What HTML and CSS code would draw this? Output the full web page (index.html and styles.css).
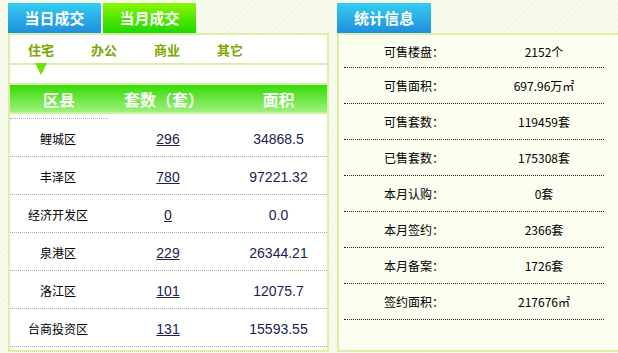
FILE: index.html
```html
<!DOCTYPE html>
<html lang="zh-CN">
<head>
    <meta charset="UTF-8">
    <title>成交统计</title>
    <link rel="stylesheet" href="styles.css">
</head>
<body>
    <div class="page">
        <div class="panel deal">
            <div class="tabs">
                <a href="#" class="tab blue">当日成交</a>
                <a href="#" class="tab green">当月成交</a>
            </div>
            <div class="box">
                <div class="subnav">
                    <a href="#">住宅</a>
                    <a href="#">办公</a>
                    <a href="#">商业</a>
                    <a href="#">其它</a>
                </div>
                <div class="pointer"><span class="arrow"></span></div>
                <div class="thead">
                    <span>区县</span>
                    <span>套数（套）</span>
                    <span>面积</span>
                </div>
                <div class="tbody">
                    <div class="cut"></div>
                    <div class="row"><span class="name">鲤城区</span><a href="#" class="num">296</a><span class="area">34868.5</span></div>
                    <div class="row"><span class="name">丰泽区</span><a href="#" class="num">780</a><span class="area">97221.32</span></div>
                    <div class="row"><span class="name">经济开发区</span><a href="#" class="num">0</a><span class="area">0.0</span></div>
                    <div class="row"><span class="name">泉港区</span><a href="#" class="num">229</a><span class="area">26344.21</span></div>
                    <div class="row"><span class="name">洛江区</span><a href="#" class="num">101</a><span class="area">12075.7</span></div>
                    <div class="row"><span class="name">台商投资区</span><a href="#" class="num">131</a><span class="area">15593.55</span></div>
                </div>
            </div>
        </div>

        <div class="panel stats">
            <div class="tabs">
                <a href="#" class="tab blue">统计信息</a>
            </div>
            <div class="box">
                <ul class="info">
                    <li><span>可售楼盘：</span><span>2152个</span></li>
                    <li><span>可售面积：</span><span>697.96万㎡</span></li>
                    <li><span>可售套数：</span><span>119459套</span></li>
                    <li><span>已售套数：</span><span>175308套</span></li>
                    <li><span>本月认购：</span><span>0套</span></li>
                    <li><span>本月签约：</span><span>2366套</span></li>
                    <li><span>本月备案：</span><span>1726套</span></li>
                    <li><span>签约面积：</span><span>217676㎡</span></li>
                </ul>
            </div>
        </div>
    </div>
</body>
</html>
```

FILE: styles.css
```css
html, body {
    margin: 0;
    padding: 0;
    overflow: hidden;
}
body {
    font-family: "Noto Sans CJK SC", sans-serif;
    font-size: 12px;
    color: #000;
    background-color: #f6f9ea;
    background-image: repeating-linear-gradient(135deg, #f9fbf0 0, #f9fbf0 2px, #f4f8e6 2px, #f4f8e6 4px);
}
a {
    text-decoration: none;
}
.page {
    display: flex;
    gap: 8px;
    height: 352px;
    padding: 3px 0 0 8px;
    box-sizing: border-box;
}
.panel {
    display: flex;
    flex-direction: column;
    flex: none;
}
.deal {
    width: 321px;
}
.stats {
    width: 300px;
}
.tabs {
    display: flex;
    height: 30px;
}
.tab {
    width: 93px;
    line-height: 30px;
    text-align: center;
    color: white;
    font-size: 15px;
    font-weight: bold;
}
.tab.blue {
    background: linear-gradient(#34cdf2, #1f8fdb);
}
.tab.green {
    background: linear-gradient(#8af500, #1cd900);
    border-left: 2px solid #fbfdf4;
}
.stats .tab {
    width: 94px;
}
.box {
    flex: 1;
    border: 2px solid #dbf0a6;
    background: white;
}
.subnav {
    display: flex;
    gap: 37px;
    height: 28px;
    padding-left: 18px;
    align-items: center;
    border-bottom: 2px solid #d9eea8;
}
.subnav a {
    color: #7aaa00;
    font-size: 13px;
    font-weight: bold;
}
.pointer {
    height: 20px;
    border-bottom: 2px solid #d9eea8;
}
.arrow {
    display: block;
    width: 0;
    height: 0;
    margin: -2px 0 0 25px;
    border-left: 6px solid transparent;
    border-right: 6px solid transparent;
    border-top: 12px solid #6ee400;
}
.thead, .row {
    display: grid;
    grid-template-columns: 96px 124px 97px;
    text-align: center;
    align-items: center;
}
.thead {
    height: 27px;
    background: linear-gradient(#35dc05, #9ff07c);
    border-bottom: 2px solid #c9f29c;
    color: white;
    font-size: 16px;
    font-weight: bold;
}
.thead span:first-child {
    padding-left: 2px;
}
.thead span:nth-child(2) {
    padding-right: 8px;
}
.tbody {
    padding-top: 4px;
}
.cut {
    width: 98px;
    border-top: 1px dotted #a8a8a8;
}
.row {
    height: 37px;
    padding-top: 2px;
    box-sizing: border-box;
    height: 38px;
    border-bottom: 1px dotted #a8a8a8;
}
.row .num {
    justify-self: center;
    color: #1a2152;
    text-decoration: underline;
    font-family: "Liberation Sans", sans-serif;
    font-size: 14px;
}
.row .area {
    color: #1a2152;
    font-family: "Liberation Sans", sans-serif;
    font-size: 14px;
}
.stats .box {
    background: #fcfef0;
    border-right: none;
}
.info {
    list-style: none;
    margin: 0 0 0 5px;
    padding: 0;
    width: 260px;
}
.info li {
    display: grid;
    grid-template-columns: 140px 120px;
    align-items: center;
    height: 35px;
    border-bottom: 1px dotted #222;
}
.info li:first-child {
    height: 32px;
}
.info li span:first-child {
    padding-left: 40px;
}
.info li span:last-child {
    text-align: center;
}
```
